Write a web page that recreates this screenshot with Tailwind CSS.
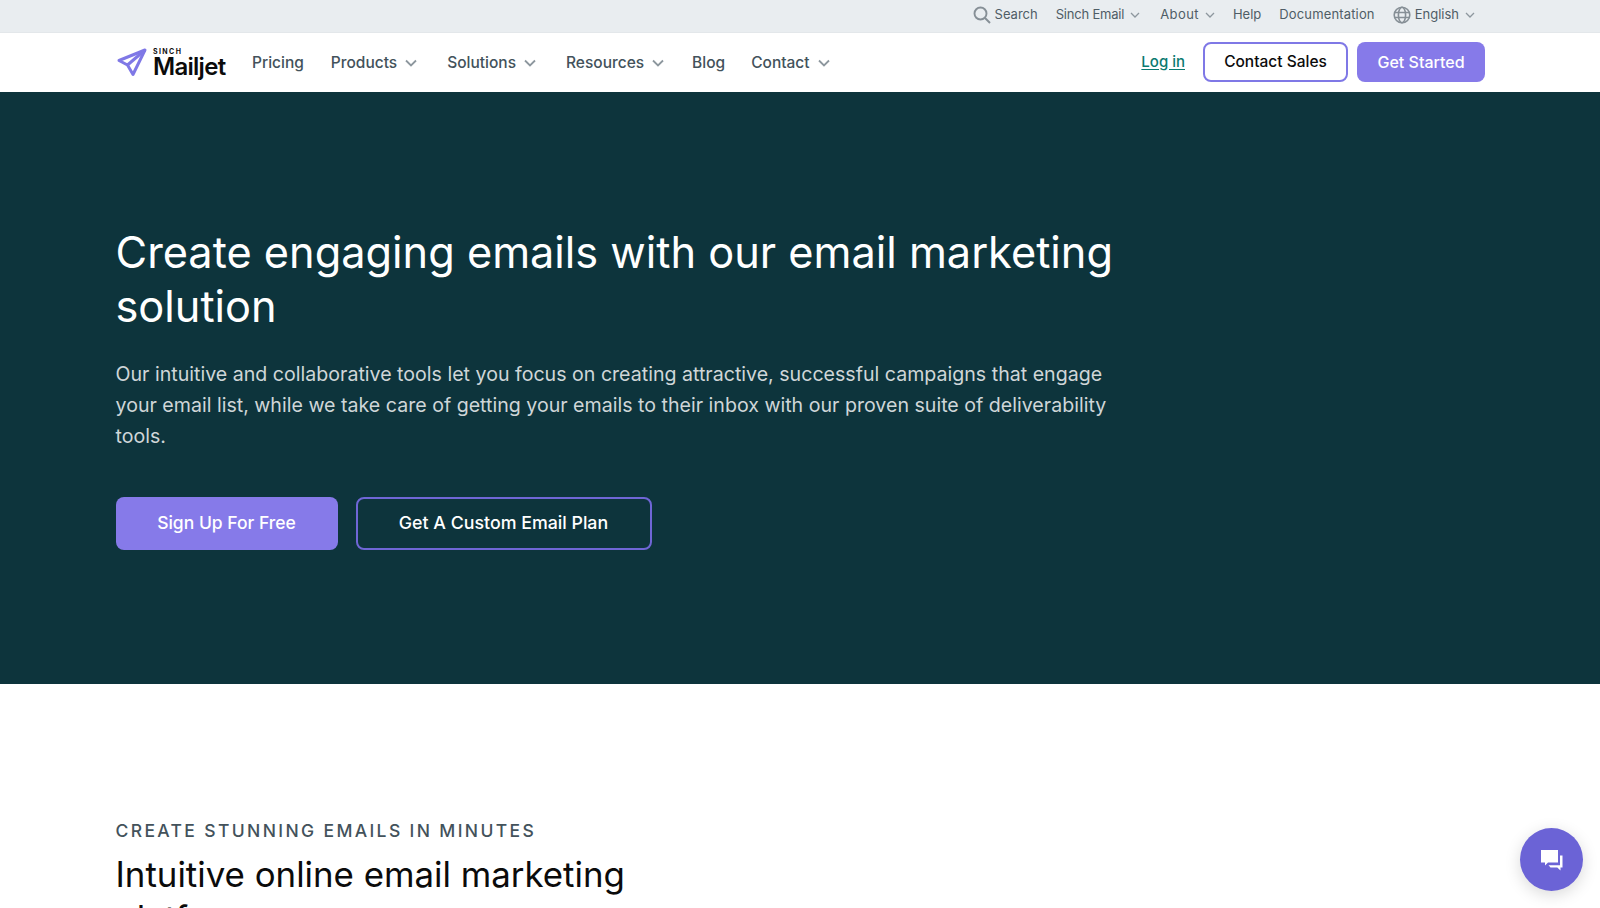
<!DOCTYPE html>
<html lang="en">
<head>
    <meta charset="UTF-8">
    <meta name="viewport" content="width=device-width, initial-scale=1.0">
    <title>Email Marketing Solution | Mailjet</title>
    <script src="https://cdn.jsdelivr.net/npm/@tailwindcss/browser@4"></script>
</head>
<body class="h-[908px] overflow-hidden bg-white font-['Inter',sans-serif]">
    <!-- top bar -->
    <div class="h-[33px] pb-[3px] bg-[#e9edf0] border-b border-[#e3e7ea] flex items-center justify-end gap-[18px] pr-[125px] text-[13px] text-[#4f5d66]">
        <a class="flex items-center gap-[4px]">
            <svg class="w-[18px] h-[18px]" viewBox="0 0 18 18" fill="none" stroke="#868f96" stroke-width="1.9"><circle cx="7.5" cy="7.5" r="6"/><path d="M12 12l5 5"/></svg>
            Search
        </a>
        <a class="flex items-center gap-[6px] mr-[2px] tracking-[-0.2px]">Sinch Email
            <svg class="w-[10px] h-[6px]" viewBox="0 0 10 6" fill="none" stroke="#8d979e" stroke-width="1.3"><path d="M1 1l4 4 4-4"/></svg>
        </a>
        <a class="flex items-center gap-[6px] tracking-[0.4px]">About
            <svg class="w-[10px] h-[6px]" viewBox="0 0 10 6" fill="none" stroke="#8d979e" stroke-width="1.3"><path d="M1 1l4 4 4-4"/></svg>
        </a>
        <a>Help</a>
        <a class="tracking-[0.15px]">Documentation</a>
        <a class="flex items-center gap-[4px]">
            <svg class="w-[18px] h-[18px]" viewBox="0 0 18 18" fill="none" stroke="#868f96" stroke-width="1.6"><circle cx="9" cy="9" r="7.8"/><ellipse cx="9" cy="9" rx="3.6" ry="7.8"/><path d="M1.6 6.5h14.8M1.6 11.5h14.8"/></svg>
            English
            <svg class="w-[10px] h-[6px] ml-[2px]" viewBox="0 0 10 6" fill="none" stroke="#8d979e" stroke-width="1.3"><path d="M1 1l4 4 4-4"/></svg>
        </a>
    </div>

    <!-- main nav -->
    <nav class="h-[59px] bg-white flex items-center justify-between pl-[117px] pr-[115px]">
        <div class="flex items-center">
            <a class="flex items-center w-[136px]">
                <svg class="w-[31px] h-[31px]" viewBox="0 0 31 31" fill="none" stroke="#7f78e6" stroke-width="3" stroke-linejoin="round"><path d="M28 3L2 13.5l8.5 4.5L16 27.5z"/><path d="M28 3L10.5 18"/></svg>
                <div class="ml-[5px] flex flex-col">
                    <span class="text-[7px] leading-[8px] font-bold tracking-[0.2em] text-[#111]">SINCH</span>
                    <span class="text-[24px] leading-[22px] font-semibold tracking-[-0.03em] text-[#0b0b0b]">Mailjet</span>
                </div>
            </a>
            <div class="flex items-center text-[15.5px] font-medium text-[#43525b] ml-[-1px]">
                <a>Pricing</a>
                <a class="flex items-center gap-[8px] ml-[27px]">Products
                    <svg class="w-[12px] h-[8px]" viewBox="0 0 12 8" fill="none" stroke="#8d979e" stroke-width="1.8"><path d="M1 1.5l5 5 5-5"/></svg>
                </a>
                <a class="flex items-center gap-[8px] ml-[30px]">Solutions
                    <svg class="w-[12px] h-[8px]" viewBox="0 0 12 8" fill="none" stroke="#8d979e" stroke-width="1.8"><path d="M1 1.5l5 5 5-5"/></svg>
                </a>
                <a class="flex items-center gap-[8px] ml-[30px]">Resources
                    <svg class="w-[12px] h-[8px]" viewBox="0 0 12 8" fill="none" stroke="#8d979e" stroke-width="1.8"><path d="M1 1.5l5 5 5-5"/></svg>
                </a>
                <a class="ml-[28px]">Blog</a>
                <a class="flex items-center gap-[8px] ml-[26px]">Contact
                    <svg class="w-[12px] h-[8px]" viewBox="0 0 12 8" fill="none" stroke="#8d979e" stroke-width="1.8"><path d="M1 1.5l5 5 5-5"/></svg>
                </a>
            </div>
        </div>
        <div class="flex items-center mb-[1px]">
            <a class="text-[15px] font-medium text-[#0b7a70] underline underline-offset-2 mr-[18px]">Log in</a>
            <a class="w-[145px] h-[40px] flex items-center justify-center rounded-[8px] border-2 border-[#7f78e6] bg-white text-[15.5px] font-medium text-[#0b0b0b]">Contact Sales</a>
            <a class="w-[128px] h-[40px] ml-[9px] flex items-center justify-center rounded-[8px] bg-[#867ae9] text-[16px] font-medium text-white">Get Started</a>
        </div>
    </nav>

    <!-- hero -->
    <section class="h-[592px] bg-[#0d343c] pl-[115.5px] pt-[133px]">
        <h1 class="w-[1040px] text-[43.3px] leading-[54px] font-normal text-white">Create engaging emails with our email marketing solution</h1>
        <p class="w-[1015px] mt-[26px] text-[19.6px] leading-[31px] text-[#cfd6d8]">Our intuitive and collaborative tools let you focus on creating attractive, successful campaigns that engage your email list, while we take care of getting your emails to their inbox with our proven suite of deliverability tools.</p>
        <div class="flex mt-[45px] gap-[18px]">
            <a class="w-[222px] h-[53px] flex items-center justify-center rounded-[8px] bg-[#867ae9] text-[17.5px] font-medium text-white">Sign Up For Free</a>
            <a class="w-[296px] h-[53px] flex items-center justify-center rounded-[8px] border-2 border-[#6f66d6] text-[17.8px] font-medium text-white">Get A Custom Email Plan</a>
        </div>
    </section>

    <!-- next section -->
    <section class="pl-[115.5px] pt-[135px]">
        <div class="text-[17.5px] leading-[24px] font-medium tracking-[0.135em] text-[#43525b]">CREATE STUNNING EMAILS IN MINUTES</div>
        <h2 class="w-[560px] mt-[9px] text-[34.85px] leading-[44px] font-normal text-[#0b0b0b]">Intuitive online email marketing platform</h2>
    </section>

    <!-- chat button -->
    <button class="fixed left-[1520px] top-[828px] w-[63px] h-[63px] rounded-full bg-[#6b63d6] shadow-[0_4px_16px_rgba(0,0,0,0.15)] flex items-center justify-center">
        <svg class="w-[24px] h-[24px]" viewBox="0 0 24 24" fill="#fff">
            <path d="M1 2h17v12.5H8L5 17.5v-3H1z"/>
            <path d="M20 7.5h2.5v12h-2v3l-3.2-3H10.5l-2-2.3H20z"/>
        </svg>
    </button>
</body>
</html>
